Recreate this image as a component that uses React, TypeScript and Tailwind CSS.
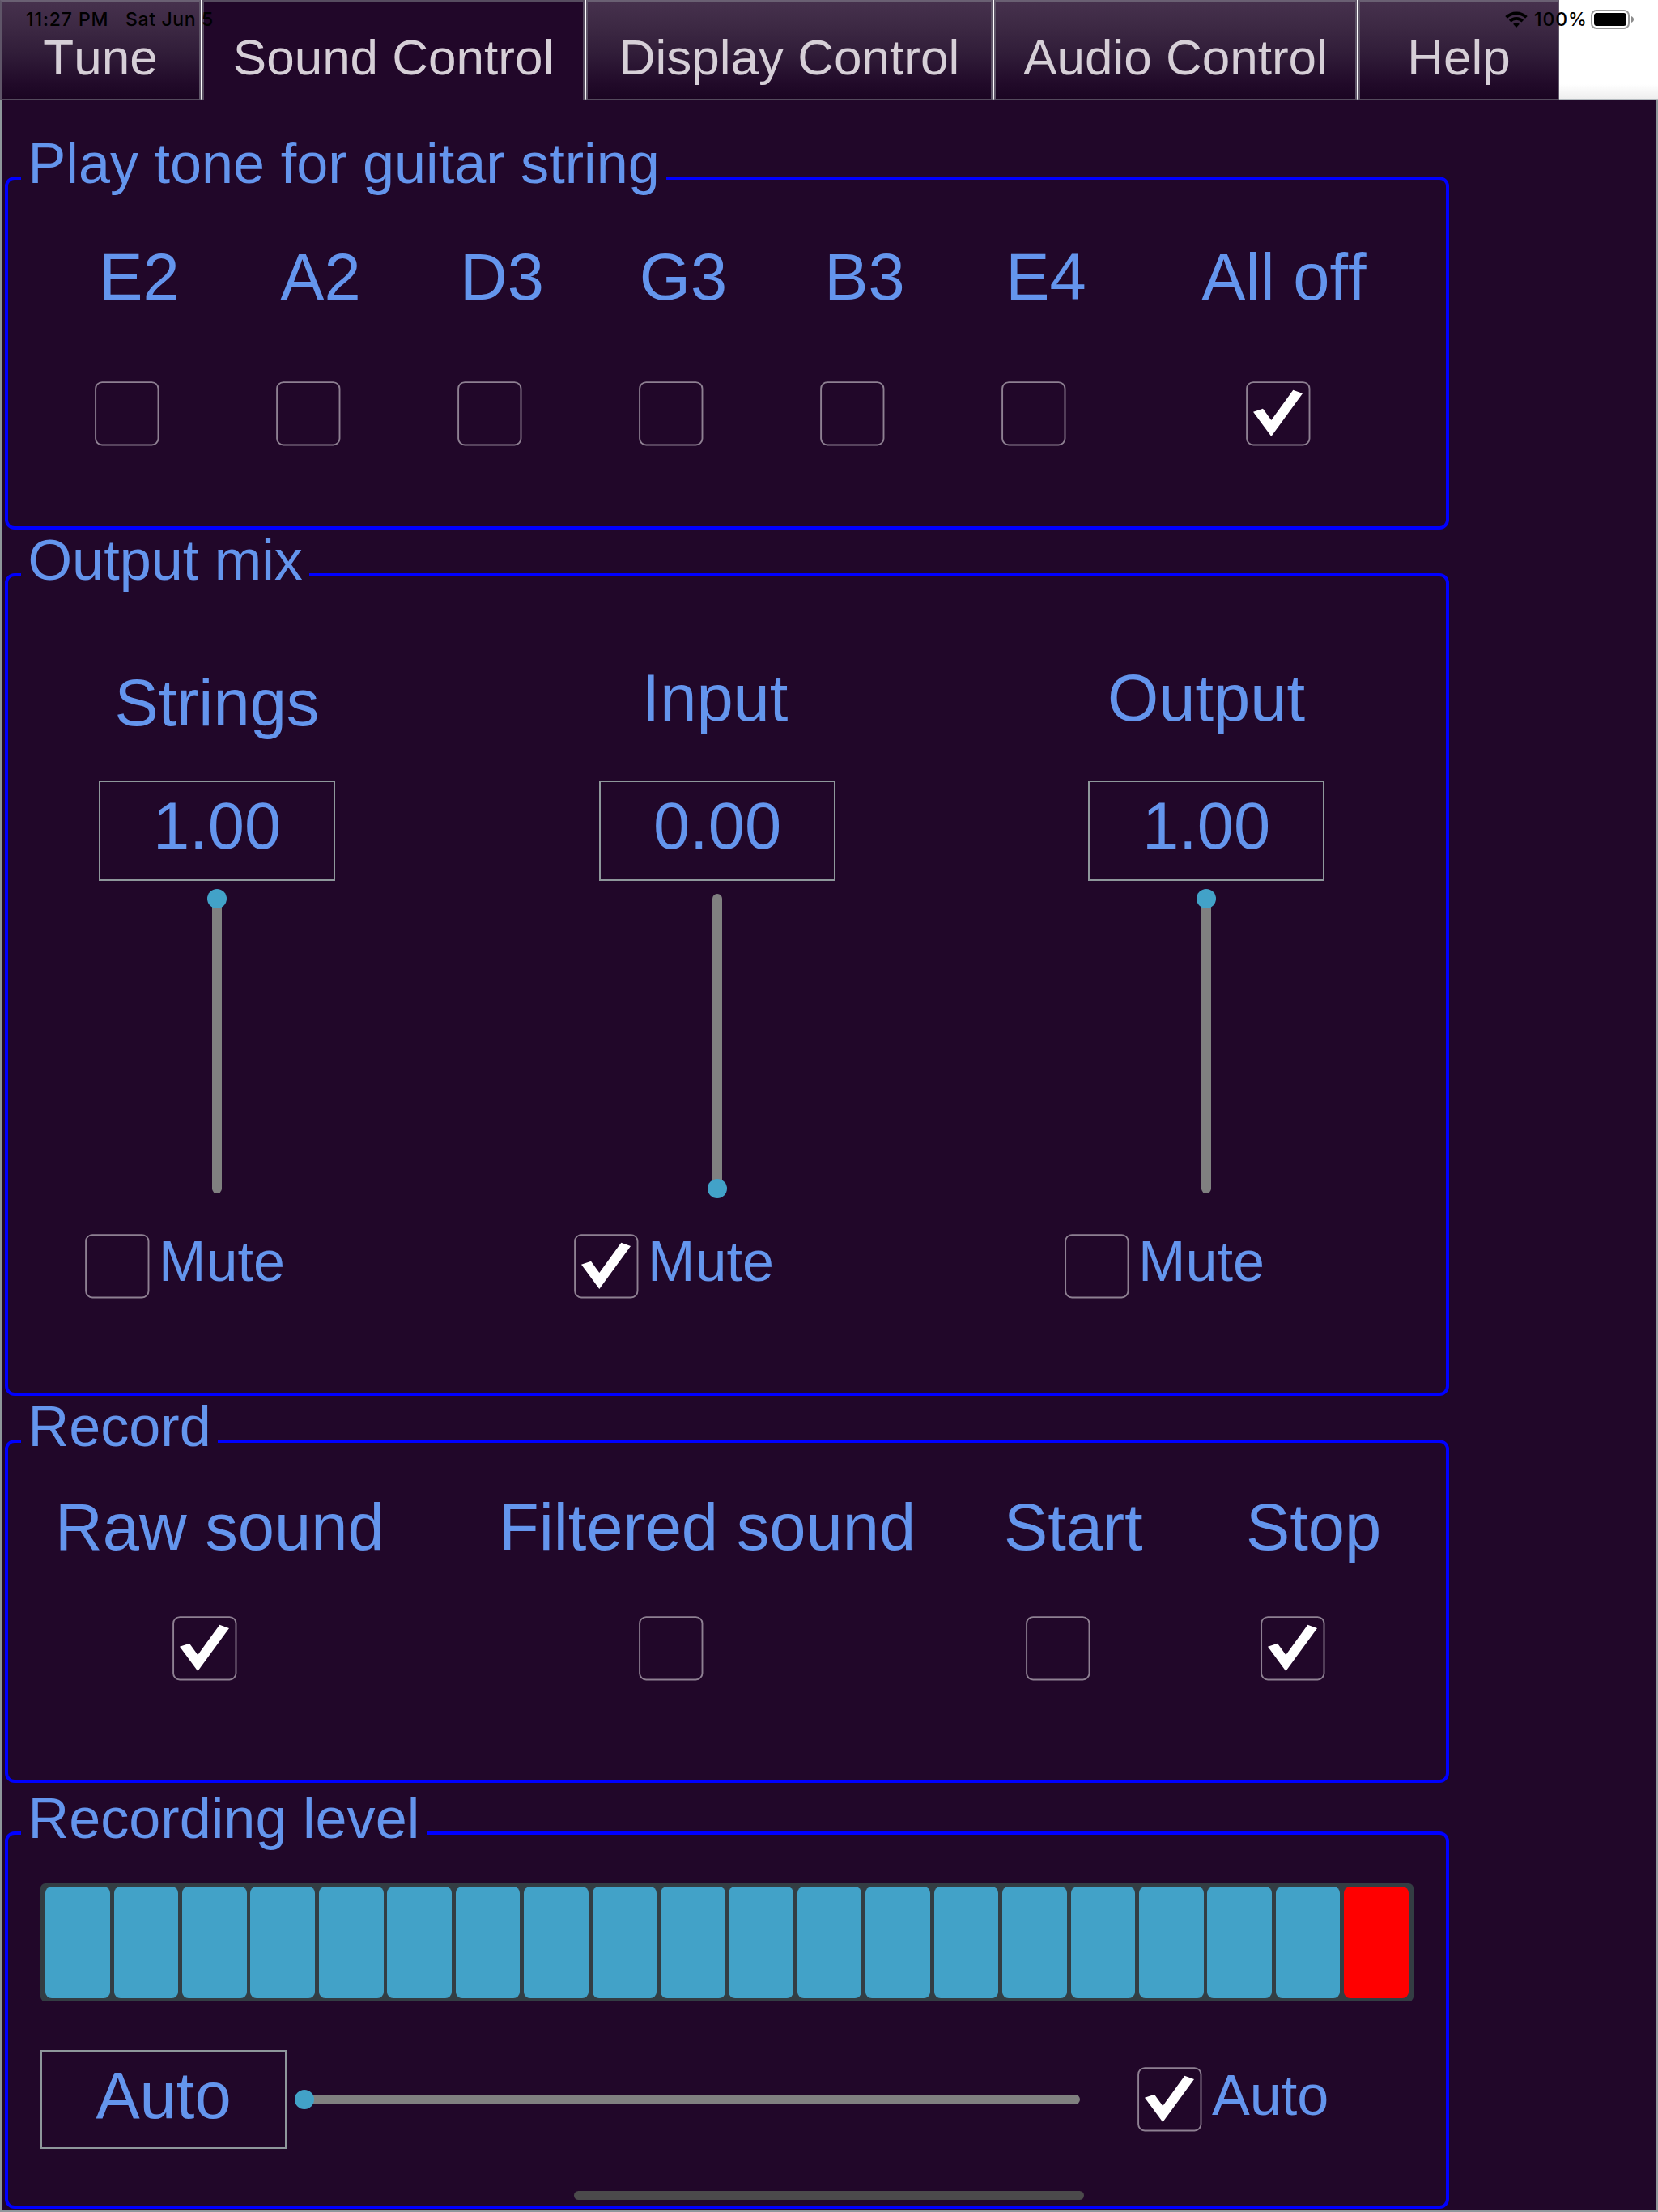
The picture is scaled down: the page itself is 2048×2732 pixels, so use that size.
import React from "react";

type TabProps = { label: string; width: string; active?: boolean };

function Tab({ label, width, active = false }: TabProps) {
  return (
    <div
      className={`${width} flex h-[124px] shrink-0 justify-center border-2 text-[62px] leading-[69px] text-[#d6cfd7] ${
        active
          ? "border-b-0 border-[#574c60] bg-[#210729]"
          : "border-[#5f5568] border-t-[#6a6073] border-b-[#544a5c] bg-[linear-gradient(to_bottom,#46314d_0%,#3d2944_25%,#301c38_55%,#210a29_85%,#1b0522_100%)]"
      }`}
    >
      <span className="mt-[34px] whitespace-nowrap">{label}</span>
    </div>
  );
}

function CheckBox({ checked = false, className = "" }: { checked?: boolean; className?: string }) {
  return (
    <svg className={`h-20 w-20 shrink-0 ${className}`} viewBox="0 0 80 80" fill="none">
      <rect x="1.1" y="1.1" width="77.4" height="77.4" rx="8" stroke="#8e8092" strokeWidth="1.9" />
      {checked && <path d="M58.3 10.7 70 15 31.3 68 9 37.7 21 33.7 31.3 48Z" fill="#fff" />}
    </svg>
  );
}

function Group({
  title,
  className,
  children,
}: {
  title: string;
  className: string;
  children: React.ReactNode;
}) {
  return (
    <section className={`${className} ml-1 w-[1784px] rounded-xl border-4 border-[#0000ff]`}>
      <h2 className="-mt-[57px] ml-4 w-fit bg-[#210729] px-[8.5px] text-[70.2px] leading-[73px] whitespace-nowrap">
        {title}
      </h2>
      {children}
    </section>
  );
}

function StringCell({
  label,
  checked,
  wide = false,
}: {
  label: string;
  checked?: boolean;
  wide?: boolean;
}) {
  return (
    <div className={`flex shrink-0 flex-col items-center ${wide ? "w-[364px]" : "w-[224px]"}`}>
      <span className="whitespace-nowrap">{label}</span>
      <CheckBox checked={checked} className={`mt-[84px] ${wide ? "mr-[15px]" : "mr-[31px]"}`} />
    </div>
  );
}

function Fader({
  label,
  value,
  muted = false,
  atTop = false,
  column,
  labelOffset,
  muteOffset,
}: {
  label: string;
  value: string;
  muted?: boolean;
  atTop?: boolean;
  column: string;
  labelOffset: string;
  muteOffset: string;
}) {
  return (
    <div className={`${column} flex w-[400px] shrink-0 flex-col items-center`}>
      <div className={`h-[236px] ${labelOffset}`}>{label}</div>
      <div className="h-[124px] w-[292px] border-2 border-[#8e979b] pt-2 text-center">{value}</div>
      <div
        className={`mt-4 flex h-[370px] w-3 flex-col items-center rounded-full bg-[#808080] ${
          atTop ? "justify-start" : "justify-end"
        }`}
      >
        <div className={`size-6 shrink-0 rounded-full bg-[#42a2c8] ${atTop ? "-mt-1.5" : "-mb-1.5"}`} />
      </div>
      <div className={`mt-[50px] flex items-start self-start ${muteOffset}`}>
        <CheckBox checked={muted} />
        <span className="-mt-1.5 ml-[11px] text-[70.2px] leading-[79px]">Mute</span>
      </div>
    </div>
  );
}

function RecordCell({
  label,
  checked,
  width,
  offset,
}: {
  label: string;
  checked?: boolean;
  width: string;
  offset: string;
}) {
  return (
    <div className={`flex shrink-0 flex-col items-start ${width}`}>
      <span className="whitespace-nowrap">{label}</span>
      <CheckBox checked={checked} className={`mt-[65px] ${offset}`} />
    </div>
  );
}

function StatusBar() {
  return (
    <div className="absolute inset-x-0 top-0 flex h-12 items-center pr-[30px] pl-8 font-[Inter,sans-serif] text-[23px] leading-none font-medium text-black">
      <span className="w-[101px] tracking-[0.9px] whitespace-nowrap">11:27 PM</span>
      <span className="ml-[22px] tracking-[0.65px] whitespace-nowrap">Sat Jun 5</span>
      <svg className="ml-auto h-5 w-7" viewBox="0 0 28 20" fill="none" stroke="#000" strokeWidth="3.8">
        <path d="M1.6 7.4a17.6 17.6 0 0 1 24.8 0" />
        <path d="M6.2 12.1a11.2 11.2 0 0 1 15.6 0" />
        <path d="M14 20l-3.9-4.3a5.6 5.6 0 0 1 7.8 0z" fill="#000" stroke="none" />
      </svg>
      <span className="ml-[8px] w-[65px] tracking-[0.9px] whitespace-nowrap">100%</span>
      <svg className="ml-[5px] h-6 w-[53px]" viewBox="0 0 53 24" fill="none">
        <rect x="1" y="1" width="46" height="22" rx="6" fill="#fff" stroke="#999" strokeWidth="2" />
        <rect x="4" y="4" width="40" height="16" rx="3.5" fill="#000" />
        <path d="M50 8c4 1.500 4 6.500 0 8z" fill="#8c8c8c" />
      </svg>
    </div>
  );
}

const METER = Array.from({ length: 20 }, (_, i) => i);

export default function App() {
  return (
    <div className="relative flex h-[2732px] w-[2048px] flex-col overflow-hidden bg-[#210729] font-['Liberation_Sans',Arial,sans-serif] text-[81.3px] leading-[91px] text-[#6495ed] [font-kerning:none]">
      <nav className="flex h-[124px] shrink-0 gap-0.5 bg-[linear-gradient(to_bottom,#fff_104px,#eee_122px,#b4bbbf_122px)]">
        <Tab label="Tune" width="w-[248px]" />
        <Tab label="Sound Control" width="w-[472px]" active />
        <Tab label="Display Control" width="w-[502px]" />
        <Tab label="Audio Control" width="w-[448px]" />
        <Tab label="Help" width="w-[248px]" />
      </nav>

      <main className="h-[2608px] border-2 border-t-0 border-[#8e979b] pt-[94px]">
        <Group title="Play tone for guitar string" className="h-[436px]">
          <div className="mt-[58px] ml-[50px] flex">
            <StringCell label="E2" />
            <StringCell label="A2" />
            <StringCell label="D3" />
            <StringCell label="G3" />
            <StringCell label="B3" />
            <StringCell label="E4" />
            <StringCell label="All off" checked wide />
          </div>
        </Group>

        <Group title="Output mix" className="mt-[54px] h-[1016px]">
          <div className="flex">
            <Fader label="Strings" value="1.00" atTop column="ml-[58px]" labelOffset="pt-[94px]" muteOffset="ml-[37px]" />
            <Fader label="Input" value="0.00" muted column="ml-[218px]" labelOffset="pt-[88px] pr-1.5" muteOffset="ml-[23px]" />
            <Fader label="Output" value="1.00" atTop column="ml-[204px]" labelOffset="pt-[88px]" muteOffset="ml-[25px]" />
          </div>
        </Group>

        <Group title="Record" className="mt-[54px] h-[424px]">
          <div className="mt-[42px] ml-[58px] flex">
            <RecordCell label="Raw sound" checked width="w-[548px]" offset="ml-[145px]" />
            <RecordCell label="Filtered sound" width="w-[624px]" offset="ml-[173px]" />
            <RecordCell label="Start" width="w-[299px]" offset="ml-[27px]" />
            <RecordCell label="Stop" checked width="w-[170px]" offset="ml-[18px]" />
          </div>
        </Group>

        <Group title="Recording level" className="mt-[60px] h-[466px]">
          <div className="mt-[44px] ml-10 flex h-[146px] w-[1696px] gap-[4.8px] rounded-md bg-[#333d43] px-[6.2px] py-1">
            {METER.map((i) => (
              <div key={i} className={`flex-1 rounded-lg ${i === 19 ? "bg-[#ff0000]" : "bg-[#42a2c8]"}`} />
            ))}
          </div>
          <div className="mt-[60px] ml-10 flex items-start">
            <div className="h-[122px] w-[304px] border-2 border-[#8e979b] pt-2 text-center">Auto</div>
            <div className="mt-[55px] ml-4 flex h-3 w-[964px] items-center rounded-full bg-[#808080]">
              <div className="-ml-1.5 size-6 shrink-0 rounded-full bg-[#42a2c8]" />
            </div>
            <CheckBox checked className="mt-[21px] ml-[71px]" />
            <span className="mt-4 ml-3 text-[70.2px] leading-[79px]">Auto</span>
          </div>
        </Group>
      </main>

      <StatusBar />
      <div className="absolute bottom-[15px] left-[709px] h-[11px] w-[630px] rounded-full bg-[#4b4a4b]" />
    </div>
  );
}
